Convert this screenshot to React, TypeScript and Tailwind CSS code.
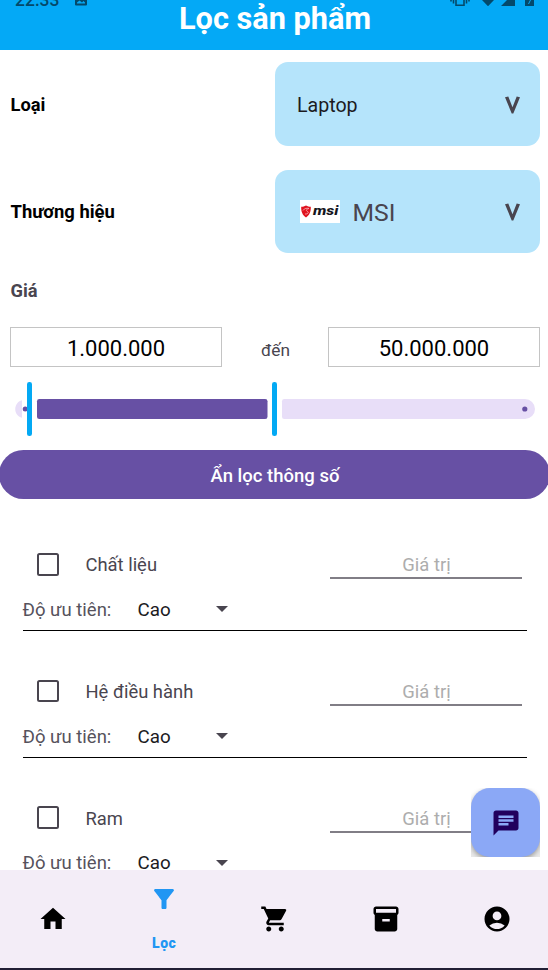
import React from "react";
import {
  MdAccountCircle,
  MdChat,
  MdFilterAlt,
  MdHome,
  MdInventory2,
  MdShoppingCart,
} from "react-icons/md";

function StatusBar() {
  return (
    <div className="flex h-[7px] items-end pl-[15px] pr-[14px] text-[#04496b]">
      <span className="-mb-[4px] text-[17.500px] font-medium leading-[21px]">22:33</span>
      <svg className="ml-[16px] mb-[1px]" width="12" height="13" viewBox="0 0 12 13">
        <path fill="currentColor" fillRule="evenodd" d="M1 0h10a1 1 0 0 1 1 1v10.500a1 1 0 0 1-1 1H1a1 1 0 0 1-1-1V1a1 1 0 0 1 1-1zM2 9.500v1h8V9.500L8.500 8 7 9.500 4.500 7.500z" />
      </svg>
      <div className="flex-1" />
      <svg width="84" height="7" viewBox="0 0 84 7">
        <g fill="none" stroke="currentColor" strokeWidth="1.600">
          <path d="M6 0v5.200h8V0" />
          <path d="M3.500 0v3.500M16.500 0v3.500M1 0v1.500M19 0v1.500" />
        </g>
        <path fill="currentColor" d="M32 0h12l-6 6.200zM51 6l6-6h8v6zM75 0h9v6h-9z" />
        <path stroke="#04a9f6" strokeWidth="1" d="M80.500 0l-2 4" />
      </svg>
    </div>
  );
}

function Chevron() {
  return (
    <svg width="16" height="19" viewBox="0 0 16 19" className="mr-[19px] mt-[2px]">
      <path fill="#49454f" d="M0 1.200L3.300 0.500L7.500 11.200L11.700 0.500L15 1.200L8.300 17.500H6.700z" />
    </svg>
  );
}

function MsiLogo() {
  return (
    <div className="flex h-[23px] w-[40.500px] items-center bg-white pl-[1px]">
      <svg width="10" height="13" viewBox="0 0 10 13">
        <path fill="#e0131f" d="M5 0.500C6.500 1.500 8 1.800 9.800 1.800C10 6.500 8.500 10.500 5 12.500C1.500 10.500 0 6.500 0.200 1.800C2 1.800 3.500 1.500 5 .5z" />
        <path fill="none" stroke="#f6b5b7" strokeWidth=".8" d="M2 5.500C3.500 3 6 3 8 3.500C5.500 4 4.500 5.500 6.500 6.500S6 9.500 4 9" />
      </svg>
      <span className="ml-[2px] w-[27px] origin-left scale-x-[1.330] text-[12px] font-extrabold italic leading-[13px] text-[#15151d]">
        msi
      </span>
    </div>
  );
}

function PriceBox({ value }: { value: string }) {
  return (
    <div className="flex h-[40px] w-[212px] items-center justify-center border border-[#c4c4c4] pt-[3px] text-[22px] text-black">
      {value}
    </div>
  );
}

function PriceSlider() {
  return (
    <svg className="block" width="548" height="56" viewBox="0 381 548 56">
      <path fill="#e8def8" d="M22 400.200C13 402.500 13 415.500 22 417.800z" />
      <circle cx="25.200" cy="409" r="2.500" fill="#6750a4" />
      <rect x="27" y="382" width="5" height="54" rx="2.300" fill="#03a9f4" />
      <rect x="37" y="399" width="230.500" height="20" rx="2.300" fill="#6750a4" />
      <rect x="272" y="382" width="5" height="54" rx="2.300" fill="#03a9f4" />
      <path fill="#e8def8" d="M284.300 399H525a10 10 0 0 1 0 20H284.300a2.300 2.300 0 0 1-2.300-2.300V401.300a2.300 2.300 0 0 1 2.300-2.300z" />
      <circle cx="524.800" cy="409" r="2.600" fill="#6750a4" />
    </svg>
  );
}

function SpecRow({ name }: { name: string }) {
  return (
    <section className="ml-[22.500px] h-[126.700px] w-[504.500px] shrink-0">
      <div className="flex h-[54px] items-start">
        <div className="ml-[14px] mt-[17px] h-[22.500px] w-[22.500px] rounded-[2.500px] border-2 border-[#49454f]" />
        <span className="ml-[26.500px] mt-[18.400px] text-[18.400px] leading-[22px] text-[#49454f]">{name}</span>
        <div className="ml-auto mr-[5px] mt-[18.400px] h-[24.900px] w-[192px] border-b-2 border-[#817e86] pl-[1px] text-center text-[18.400px] leading-[22px] text-[#adadad]">
          Giá trị
        </div>
      </div>
      <div className="flex h-[41px] items-start border-b border-black pt-[8.900px] text-[18.500px] leading-[22px]">
        <span className="w-[115px] text-[#56525c]">Độ ưu tiên:</span>
        <span className="w-[78px] text-[18.800px] text-[#1c1b1f]">Cao</span>
        <svg className="mt-[7.500px]" width="12" height="6" viewBox="0 0 12 6">
          <path d="M0 0h12L6 6z" fill="#49454f" />
        </svg>
      </div>
    </section>
  );
}

export default function App() {
  return (
    <div className="relative flex h-[970px] w-[548px] flex-col overflow-hidden bg-white font-['Roboto',sans-serif]">
      <header className="h-[50px] shrink-0 bg-[#04a9f6]">
        <StatusBar />
        <h1 className="-mt-[6px] pl-[2px] text-center text-[30.700px] font-bold leading-[36px] text-white">Lọc sản phẩm</h1>
      </header>

      <main className="flex h-[820px] shrink-0 flex-col overflow-hidden">
        <div className="mt-[12px] flex h-[84px] shrink-0 items-center pl-[10.500px] pr-[8px]">
          <span className="mt-[1.500px] flex-1 text-[18.300px] font-bold text-black">Loại</span>
          <div className="flex h-full w-[265px] items-center justify-between rounded-[13px] bg-[#b5e4fb] pl-[22px]">
            <span className="mt-[3px] text-[19.600px] text-[#1c1b1f]">Laptop</span>
            <Chevron />
          </div>
        </div>
        <div className="mt-[24px] flex h-[83px] shrink-0 items-center pl-[10.500px] pr-[8px]">
          <span className="flex-1 text-[18.400px] font-bold text-black">Thương hiệu</span>
          <div className="flex h-full w-[265px] items-center rounded-[13px] bg-[#b5e4fb] pl-[24.500px]">
            <MsiLogo />
            <span className="ml-[12.500px] mt-[3px] flex-1 text-[24.700px] text-[#49454f]">MSI</span>
            <Chevron />
          </div>
        </div>
        <h2 className="mt-[27px] h-[22px] shrink-0 pl-[10.500px] text-[18.300px] font-bold leading-[22px] text-[#49454f]">Giá</h2>
        <div className="mt-[25px] flex shrink-0 items-center justify-between pl-[10px] pr-[8px]">
          <PriceBox value="1.000.000" />
          <span className="mt-[7px] pl-[1px] text-[17.300px] text-[#49454f]">đến</span>
          <PriceBox value="50.000.000" />
        </div>
        <div className="mt-[14px] shrink-0">
          <PriceSlider />
        </div>
        <button className="-ml-[1px] mt-[13px] flex h-[49px] w-[551px] shrink-0 items-center justify-center rounded-full bg-[#6750a4] pl-[1px] pt-[4px] text-[18.500px] font-medium text-white">
          Ẩn lọc thông số
        </button>
        <div className="flex shrink-0 flex-col pt-[37px]">
          <SpecRow name="Chất liệu" />
          <SpecRow name="Hệ điều hành" />
          <SpecRow name="Ram" />
        </div>
      </main>

      <nav className="flex h-[98px] shrink-0 bg-[#f3edf7]">
        <div className="-ml-[2px] grid w-[554px] shrink-0 grid-cols-5 justify-items-center text-black">
          <MdHome className="mt-[34px]" size={30} />
          <div className="flex flex-col items-center text-[#2196f3]">
            <MdFilterAlt className="mt-[14px]" size={30} />
            <span className="mt-[21px] text-[14px] font-black leading-[17px] tracking-[0.500px]">Lọc</span>
          </div>
          <MdShoppingCart className="mt-[34px]" size={30} />
          <MdInventory2 className="mt-[34px]" size={30} />
          <MdAccountCircle className="mt-[34px]" size={30} />
        </div>
      </nav>
      <div className="h-[2px] shrink-0 bg-[#211f35]" />

      <div className="absolute left-[471px] top-[788px] h-[69px] w-[69px] overflow-hidden bg-[#e9e9e9]">
        <div className="absolute inset-x-0 top-0 h-[40px] bg-white" />
        <button className="relative flex h-[69px] w-[69px] items-center justify-center rounded-[19px] bg-[#8ba8f6] text-[#21005d] shadow-[0_2px_5px_rgba(0,0,0,0.35)]">
          <MdChat size={30} />
        </button>
      </div>
    </div>
  );
}
